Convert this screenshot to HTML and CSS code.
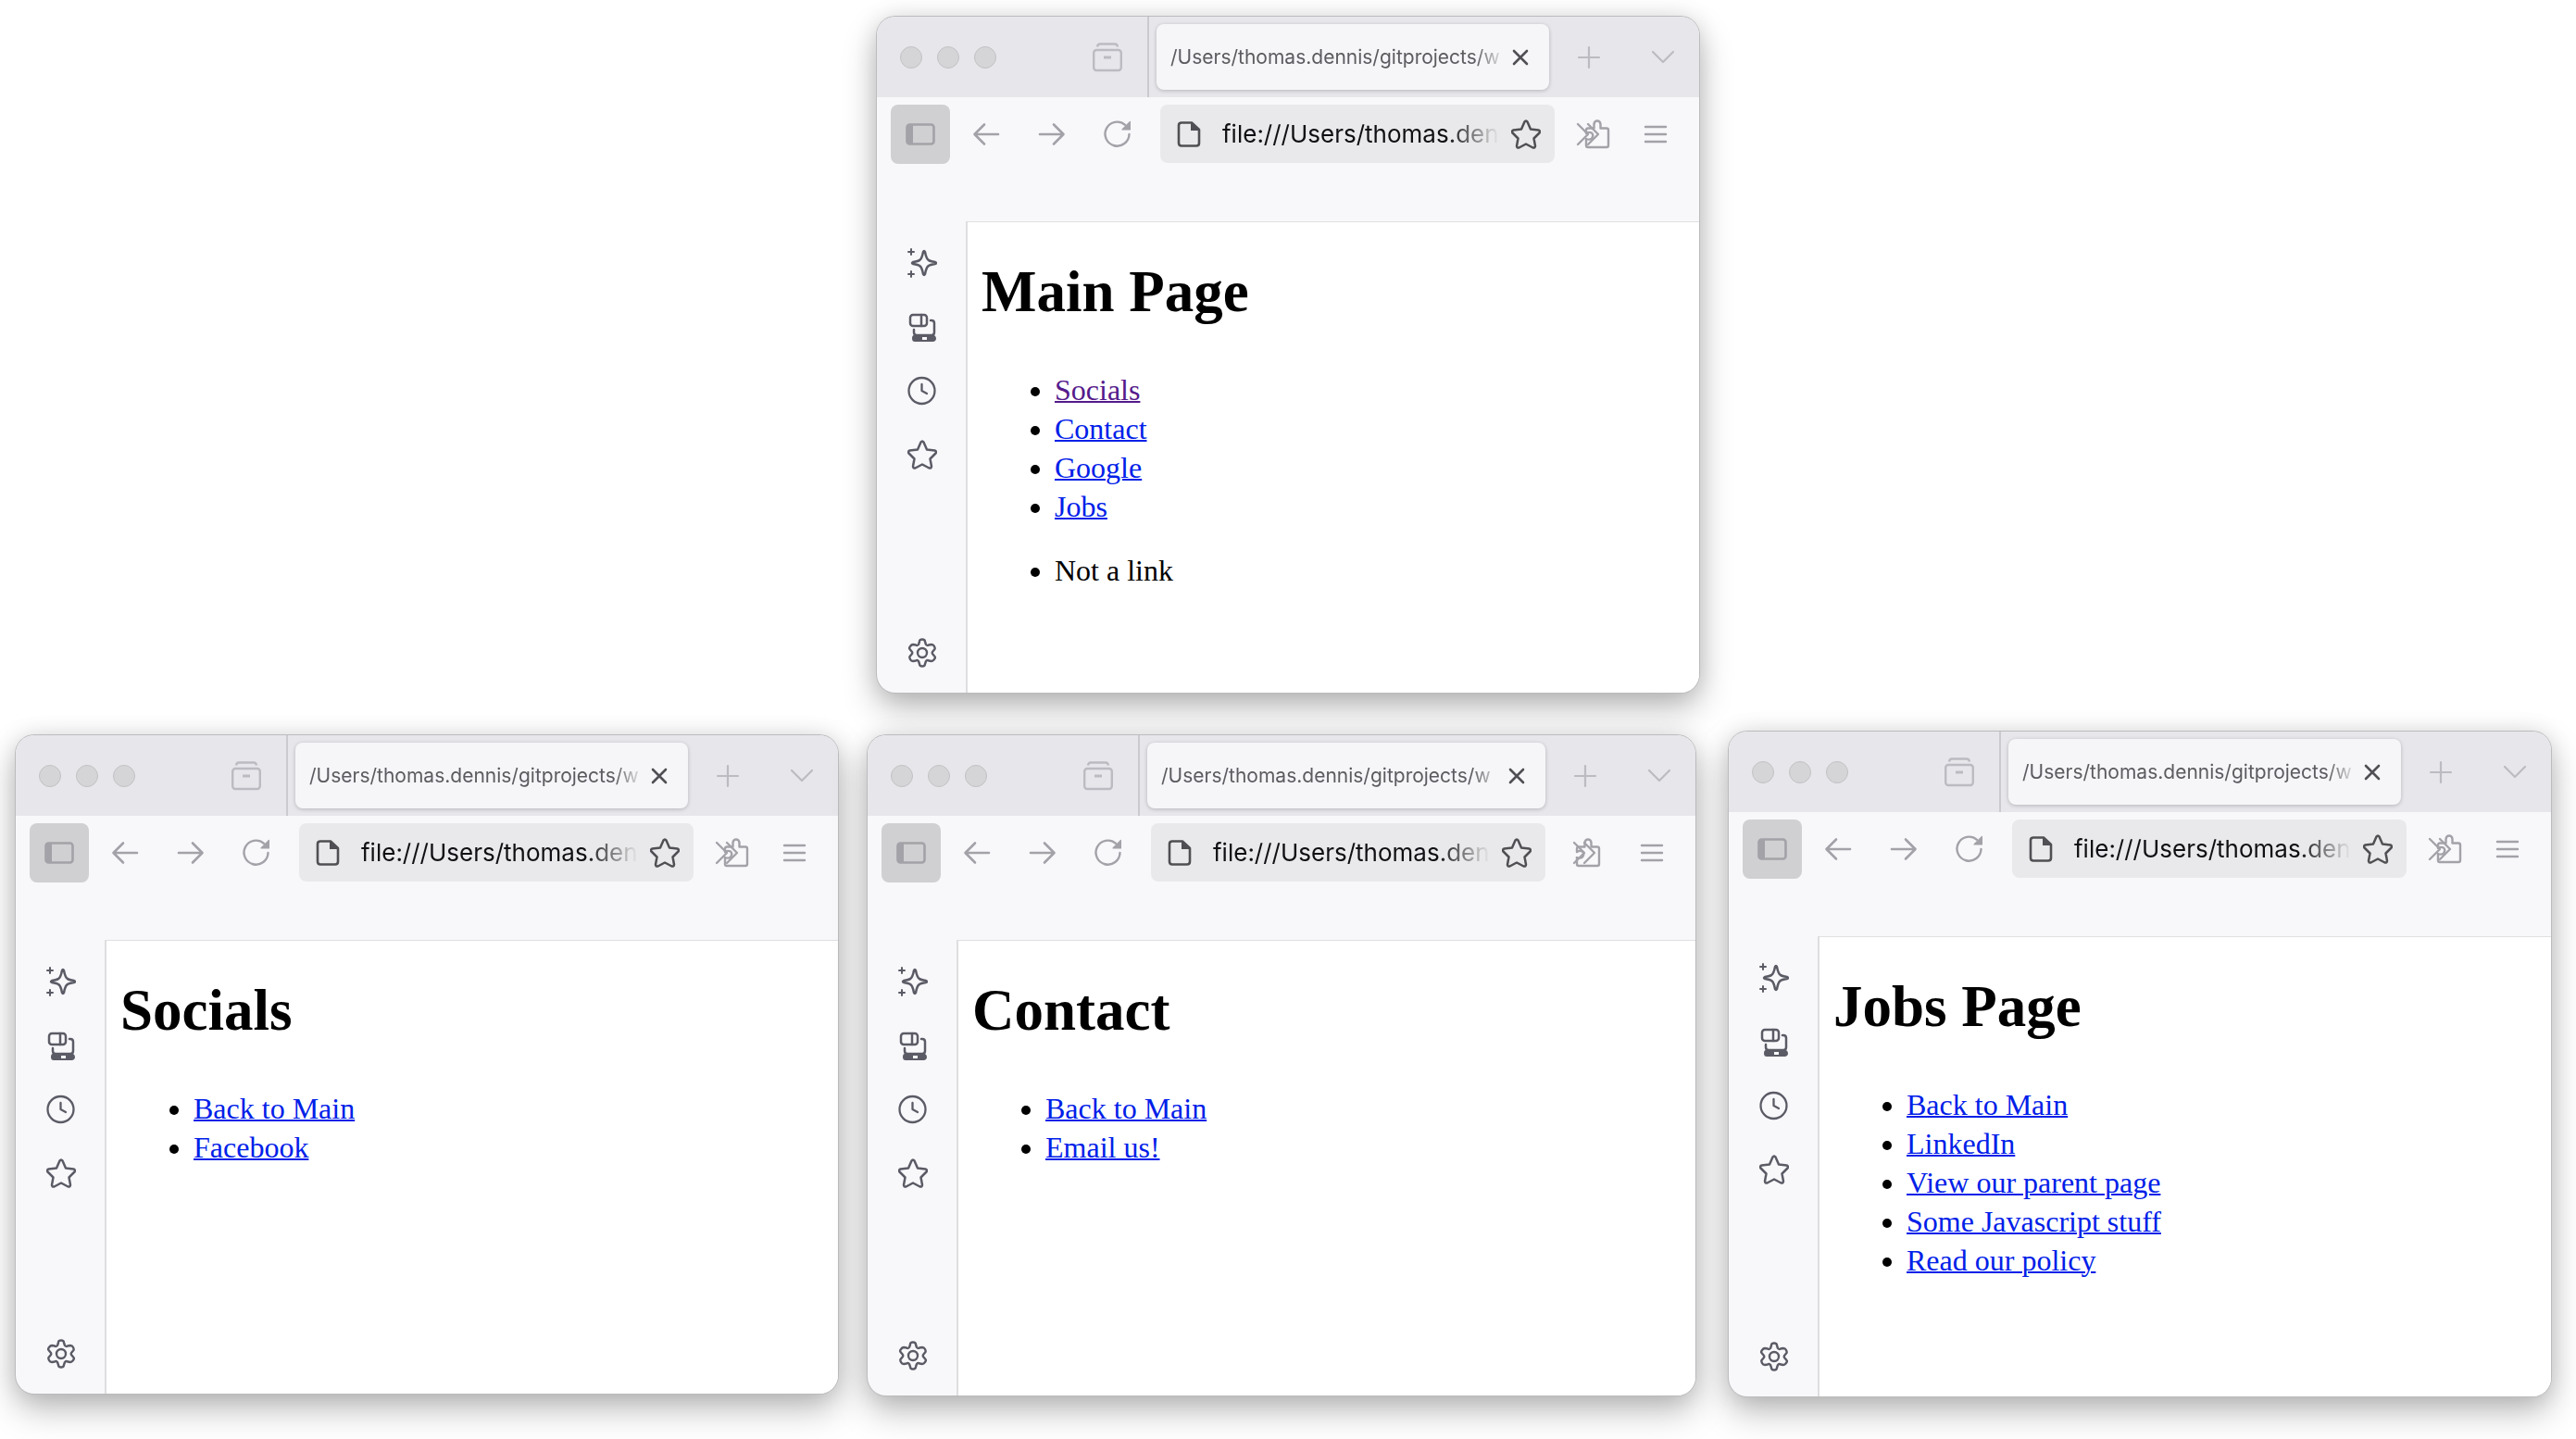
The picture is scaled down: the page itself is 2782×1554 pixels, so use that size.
FILE: index.html
```html
<!DOCTYPE html>
<html lang="en">
<head>
<meta charset="utf-8">
<meta name="viewport" content="width=device-width, initial-scale=1">
<title>Site map</title>
<link rel="stylesheet" href="styles.css">
</head>
<body>
<svg class="sprite" aria-hidden="true">
  <symbol id="i-archive" viewBox="0 0 32 32"><g fill="none" stroke="currentColor" stroke-width="2.400"><rect x="1.200" y="8" width="29.600" height="22" rx="3"/><path d="M5 4.500Q5.500 1.500 8 1.500H24Q26.500 1.500 27 4.500"/><path d="M12 16H20" stroke-width="3"/></g></symbol>
  <symbol id="i-close" viewBox="0 0 32 32"><path d="M9 9L23 23M23 9L9 23" fill="none" stroke="currentColor" stroke-width="2.600" stroke-linecap="round"/></symbol>
  <symbol id="i-plus" viewBox="0 0 32 32"><path d="M16 5V27M5 16H27" fill="none" stroke="currentColor" stroke-width="2.200" stroke-linecap="round"/></symbol>
  <symbol id="i-down" viewBox="0 0 32 32"><path d="M5 10L16 21L27 10" fill="none" stroke="currentColor" stroke-width="2.200" stroke-linecap="round" stroke-linejoin="round"/></symbol>
  <symbol id="i-panel" viewBox="0 0 32 32"><rect x="1.500" y="5.500" width="29" height="21" rx="3" fill="none" stroke="currentColor" stroke-width="2.600"/><path d="M2 6H8V26H2Z" fill="currentColor"/></symbol>
  <symbol id="i-back" viewBox="0 0 32 32"><path d="M29 16H4M14 5.500L3.500 16L14 26.500" fill="none" stroke="currentColor" stroke-width="2.600" stroke-linecap="round" stroke-linejoin="round"/></symbol>
  <symbol id="i-forward" viewBox="0 0 32 32"><path d="M3 16H28M18 5.500L28.500 16L18 26.500" fill="none" stroke="currentColor" stroke-width="2.600" stroke-linecap="round" stroke-linejoin="round"/></symbol>
  <symbol id="i-reload" viewBox="0 0 32 32"><path d="M28.500 16A13 13 0 1 1 24 5.800" fill="none" stroke="currentColor" stroke-width="2.400" stroke-linecap="round"/><path d="M30 2.500V11.500H21Q20 11.500 20.500 10.500L29 2Q30 1.500 30 2.500Z" fill="currentColor"/></symbol>
  <symbol id="i-doc" viewBox="0 0 32 32"><path d="M8 3.500H19L27 11V25.500Q27 28.500 24 28.500H8Q5 28.500 5 25.500V6.500Q5 3.500 8 3.500Z" fill="none" stroke="currentColor" stroke-width="2.600" stroke-linejoin="round"/><path d="M18 3V12H27Z" fill="currentColor"/></symbol>
  <symbol id="i-star" viewBox="0 0 32 32"><path d="M14.500 2.500Q16 0.500 17.500 2.500L21 10.500L29.500 11.500Q32 12.500 30.500 14.500L24.500 20.500L26 28.500Q26 31 23.500 30.500L16 26.500L8.500 30.500Q6 31 6 28.500L7.500 20.500L1.500 14.500Q0 12.500 2.500 11.500L11 10.500Z" fill="none" stroke="currentColor" stroke-width="2.500" stroke-linejoin="round"/></symbol>
  <symbol id="i-more" viewBox="0 0 32 32"><path d="M5 5L16 16L5 27M16 5L27 16L16 27" fill="none" stroke="currentColor" stroke-width="2.400" stroke-linecap="round" stroke-linejoin="round"/></symbol>
  <symbol id="i-puzzle" viewBox="0 0 32 32"><path d="M6 20V28Q6 30 8 30H28Q30 30 30 28V11.500Q30 9.500 28 9.500H21.500V5Q21 1.500 18 1.500T14.500 5V9.500H8Q6 9.500 6 12V15Q9 13 12 14.500Q14.500 17 12 20.500Q10 22.500 6 21" fill="none" stroke="currentColor" stroke-width="2.400" stroke-linejoin="round"/></symbol>
  <symbol id="i-menu" viewBox="0 0 32 32"><path d="M5 8H27M5 16H27M5 24H27" fill="none" stroke="currentColor" stroke-width="2.400" stroke-linecap="round"/></symbol>
  <symbol id="i-spark" viewBox="0 0 32 32"><g fill="none" stroke="currentColor" stroke-linecap="round"><path d="M17 4Q18 2 19 4Q20.500 12 23 13Q24 14 30 15Q32 16 30 17Q24 18 23 19Q20.500 20 19 28Q18 30 17 28Q15.500 20 13 19Q12 18 6 17Q4 16 6 15Q12 14 13 13Q15.500 12 17 4Z" stroke-width="2.500" stroke-linejoin="round"/><path d="M4 1V7M1 4H7M4 25V31M1 28H7" stroke-width="2"/></g></symbol>
  <symbol id="i-devices" viewBox="0 0 32 32"><g fill="none" stroke="currentColor" stroke-width="2.500" stroke-linecap="round"><rect x="3" y="3" width="18" height="12" rx="3"/><path d="M15 3V15M25 9H26Q29 9 29 12V22Q29 25 26 25H10Q7 25 7 22V19"/></g><path d="M7 25H29Q31 26 31 28.500T28 32H8Q5 32 5 28.500T7 25ZM16 27V30H21V27Z" fill="currentColor" fill-rule="evenodd"/></symbol>
  <symbol id="i-clock" viewBox="0 0 32 32"><g fill="none" stroke="currentColor" stroke-width="2.300" stroke-linecap="round" stroke-linejoin="round"><circle cx="15.500" cy="16" r="14"/><path d="M15.500 9V16L21 19"/></g></symbol>
  <symbol id="i-gear" viewBox="0 0 32 32"><g fill="none" stroke="currentColor" stroke-width="2.400" stroke-linejoin="round"><circle cx="16" cy="16" r="5"/><path d="M13 4Q13 1.500 16 1.500T19 4L20 7Q21.500 8.500 23 7.500L26 7Q28 7 29 9T29.500 12L27 15Q26.500 16 27 17L29.500 20Q30.500 21 29 23T26 25L23 24.500Q21.500 23.500 20 25L19 28Q19 30.500 16 30.500T13 28L12 25Q10.500 23.500 9 24.500L6 25Q4 25 3 23T2.500 20L5 17Q5.500 16 5 15L2.500 12Q1.500 11 3 9T6 7L9 7.500Q10.500 8.500 12 7Z"/></g></symbol>
</svg>

<main class="desktop" id="desktop"></main>

<template id="window-template">
  <section class="window">
    <header class="titlebar">
      <div class="lights"><span></span><span></span><span></span></div>
      <button class="icon-btn archive" aria-label="Recent browsing"><svg><use href="#i-archive"/></svg></button>
      <div class="tab"><span class="tab-title">/Users/thomas.dennis/gitprojects/w</span><button class="icon-btn close" aria-label="Close tab"><svg><use href="#i-close"/></svg></button></div>
      <button class="icon-btn" aria-label="New tab"><svg><use href="#i-plus"/></svg></button>
      <button class="icon-btn" aria-label="List all tabs"><svg><use href="#i-down"/></svg></button>
    </header>
    <nav class="toolbar" aria-label="Navigation">
      <button class="icon-btn panel" aria-label="Sidebar"><svg><use href="#i-panel"/></svg></button>
      <button class="icon-btn nav" aria-label="Back"><svg><use href="#i-back"/></svg></button>
      <button class="icon-btn nav" aria-label="Forward"><svg><use href="#i-forward"/></svg></button>
      <button class="icon-btn nav" aria-label="Reload"><svg><use href="#i-reload"/></svg></button>
      <div class="address"><svg><use href="#i-doc"/></svg><input type="text" aria-label="Address" value="file:///Users/thomas.den"><button class="icon-btn" aria-label="Bookmark"><svg><use href="#i-star"/></svg></button></div>
      <div class="extras">
        <button class="icon-btn more" aria-label="More tools"><svg><use href="#i-more"/></svg></button>
        <button class="icon-btn" aria-label="Extensions"><svg><use href="#i-puzzle"/></svg></button>
      </div>
      <button class="icon-btn menu" aria-label="Menu"><svg><use href="#i-menu"/></svg></button>
    </nav>
    <div class="body">
      <aside class="sidebar">
        <button class="icon-btn" aria-label="Assistant"><svg><use href="#i-spark"/></svg></button>
        <button class="icon-btn" aria-label="Synced tabs"><svg><use href="#i-devices"/></svg></button>
        <button class="icon-btn" aria-label="History"><svg><use href="#i-clock"/></svg></button>
        <button class="icon-btn" aria-label="Bookmarks"><svg><use href="#i-star"/></svg></button>
        <button class="icon-btn settings" aria-label="Settings"><svg><use href="#i-gear"/></svg></button>
      </aside>
      <article class="page"></article>
    </div>
  </section>
</template>
<script src="windows.js"></script>
</body>
</html>
```
FILE: styles.css
```css
* { box-sizing: border-box; }

body {
  margin: 0;
  background: #fff;
  font-family: Inter, "Liberation Sans", sans-serif;
}

.sprite { display: none; }

.desktop {
  min-height: 100vh;
  padding: 18px 27px 44px 17px;
  overflow: hidden;
}

.row {
  display: flex;
  justify-content: center;
  align-items: flex-start;
}

.row + .row { margin-top: 42px; }

.window {
  display: flex;
  flex-direction: column;
  border-radius: 20px;
  background: #f8f8fb;
  overflow: hidden;
  box-shadow: 0 0 0 1px #bcbcbe, 0 16px 36px rgba(0, 0, 0, 0.28), 0 0 24px rgba(0, 0, 0, 0.1);
}

.window-main { flex: 0 1 888px; min-height: 730px; margin-left: 10px; }
.window-socials { flex: 888 1 0; min-height: 711px; margin: 4px 32px 0 0; }
.window-contact { flex: 894 1 0; min-height: 713px; margin: 4px 36px 0 0; }
.window-jobs { flex: 888 1 0; min-height: 718px; }

.icon-btn {
  display: grid;
  place-items: center;
  flex: none;
  width: 32px;
  height: 32px;
  padding: 0;
  border: 0;
  background: none;
  color: inherit;
}

svg { display: block; width: 32px; height: 32px; }

.titlebar {
  display: flex;
  align-items: center;
  height: 87px;
  padding: 0 23px 0 25px;
  background: #e7e6eb;
  color: #bbbbc1;
}

.lights { display: flex; gap: 16px; }

.lights span {
  width: 24px;
  height: 24px;
  border: 1px solid #c2c2c4;
  border-radius: 50%;
  background: #d5d5d7;
}

.archive { margin: 0 29px 0 104px; }

.titlebar > .icon-btn + .icon-btn { margin-left: 48px; }

.tab {
  display: flex;
  flex: 1;
  align-items: center;
  min-width: 0;
  height: 71px;
  margin-right: 27px;
  padding: 0 15px;
  border-radius: 8px;
  background: #f6f6f9;
  box-shadow: 0 1px 4px rgba(0, 0, 0, 0.22);
  color: #5c5c60;
}

.titlebar .tab { position: relative; margin-left: 8px; }

.tab::before {
  content: "";
  position: absolute;
  top: -8px;
  left: -10px;
  width: 2px;
  height: 87px;
  background: #cacacf;
}

.tab-title {
  flex: 1;
  min-width: 0;
  overflow: hidden;
  font-size: 21px;
  line-height: 32px;
  white-space: nowrap;
  mask-image: linear-gradient(to left, transparent, #000 32px);
}

.close { color: #505054; }

.toolbar {
  display: flex;
  align-items: flex-start;
  height: 134px;
  padding: 8px 15px;
  color: #a2a2a8;
}

.panel, .nav { width: 64px; height: 64px; }
.nav { margin-left: 7px; }

.panel {
  border-radius: 8px;
  background: #d0d0d2;
}

.address {
  display: flex;
  align-items: center;
  flex: 0 1 426px;
  min-width: 0;
  height: 63px;
  margin-left: 14px;
  padding: 0 15px;
  border-radius: 8px;
  background: #e9e9eb;
  color: #505054;
}

.address svg { flex: none; }

.address input {
  flex: 1;
  min-width: 0;
  height: 40px;
  margin: 0 13px 0 20px;
  padding: 0;
  border: 0;
  background: none;
  color: #101014;
  font: 26px/40px Inter, "Liberation Sans", sans-serif;
  mask-image: linear-gradient(to left, transparent, #000 56px);
}

.extras { display: flex; margin: 16px auto 0 20px; }
.extras .more { margin-right: -24px; }
.window-contact .extras { margin-left: 26px; }
.window-contact .more { margin-right: -30px; }
.menu { margin: 16px 16px 0 0; }

.body { display: flex; flex: 1; }

.sidebar {
  display: flex;
  flex-direction: column;
  align-items: center;
  gap: 37px;
  width: 98px;
  padding: 29px 0 27px 1px;
  border-right: 2px solid #dedee1;
  color: #5b5b66;
}

.settings { margin-top: auto; }

.page {
  flex: 1;
  padding: 38px 15px;
  border-top: 1px solid #e0e0e3;
  background: #fff;
  color: #000;
  font-family: "Liberation Serif", serif;
}

.page h1 {
  margin: 0 0 48px;
  font-size: 63px;
  line-height: 74px;
}

.page ul {
  margin: 0 0 27px;
  padding-left: 79px;
  font-size: 32px;
  line-height: 42px;
}

.page a { color: #0020e8; text-decoration-thickness: 2px; }
.page a.seen { color: #551a8b; }
```
FILE: windows.js
```js
const link = (text, seen) => `<li><a href="#"${seen ? ' class="seen"' : ''}>${text}</a></li>`;
const list = (...items) => `<ul>${items.join('')}</ul>`;

const rows = [
  [
    { id: 'main', title: 'Main Page', content: list(link('Socials', true), link('Contact'), link('Google'), link('Jobs')) + list('<li>Not a link</li>') }
  ],
  [
    { id: 'socials', title: 'Socials', content: list(link('Back to Main'), link('Facebook')) },
    { id: 'contact', title: 'Contact', content: list(link('Back to Main'), link('Email us!')) },
    { id: 'jobs', title: 'Jobs Page', content: list(link('Back to Main'), link('LinkedIn'), link('View our parent page'), link('Some Javascript stuff'), link('Read our policy')) }
  ]
];

const desktop = document.getElementById('desktop');
const template = document.getElementById('window-template');

for (const windows of rows) {
  const row = document.createElement('div');
  row.className = 'row';
  for (const { id, title, content } of windows) {
    const node = template.content.cloneNode(true);
    node.querySelector('.window').classList.add(`window-${id}`);
    node.querySelector('.page').innerHTML = `<h1>${title}</h1>${content}`;
    row.append(node);
  }
  desktop.append(row);
}
```
